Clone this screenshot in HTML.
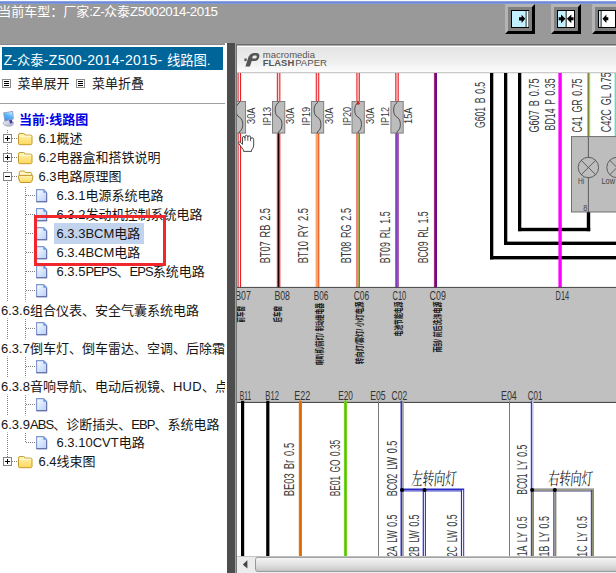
<!DOCTYPE html>
<html lang="zh-CN"><head><meta charset="utf-8"><title>线路图</title>
<style>
html,body{margin:0;padding:0;}
body{width:616px;height:573px;overflow:hidden;position:relative;background:#fff;
 font-family:"Liberation Sans","Noto Sans CJK SC",sans-serif;font-size:13px;color:#161616;}
#top{position:absolute;left:0;top:0;width:616px;height:44px;background:#999;overflow:hidden;}
#top .ln0{position:absolute;left:0;top:0;width:616px;height:4px;
 background:linear-gradient(#fff 0,#f4f6fc 0.9px,#7a96dc 1.6px,#6888d6 2.6px,#7e98dc 3.5px,#999 4px);}
#title{position:absolute;left:-1.7px;top:3px;height:17px;line-height:17px;white-space:nowrap;color:#fff;font-size:13px;}
#title span{font-size:13.33px;letter-spacing:-0.52px}
.btn{position:absolute;top:4px;width:30px;height:30px;box-sizing:border-box;
 border-top:3px solid #b4b4b4;border-left:3px solid #b4b4b4;border-right:3px solid #000;border-bottom:3px solid #000;background:#808080;}
.btn svg{position:absolute;left:3px;top:3px;}
#left{position:absolute;left:0;top:44px;width:225px;height:529px;background:#fff;overflow:hidden;border-top:1px solid #8a8a8a;box-sizing:border-box}
#hdr{position:absolute;left:2px;top:2px;width:221px;height:22.5px;background:#069;color:#fff;font-size:13.33px;line-height:22px;white-space:nowrap;overflow:hidden}
#hdr span{position:absolute;left:1.8px;top:1.5px;}
#hdr i{font-style:normal;font-size:14px;letter-spacing:0.38px}
#hdr em{font-style:normal;font-size:14px}
.mi{position:absolute;top:31px;height:16px;line-height:16px;white-space:nowrap}
.mbox{position:absolute;top:34.3px;width:9px;height:8.4px;box-sizing:border-box;border:1px solid #8c8c8c;background:#fff}
.mbox i{position:absolute;left:1px;width:5px;height:1px;background:#000}
#rule{position:absolute;left:0;top:57.5px;width:225px;height:1px;background:#a0a0a0}
.row{position:absolute;height:19px;line-height:19px;white-space:nowrap;}
.row b{color:#0000e6}
.row .nw{letter-spacing:-0.9px}
.row .wd{letter-spacing:0.3px}
.hl{background:#c2d3ee;padding:2.8px 3.4px 2.7px 2.5px;margin-left:-2.5px}
#tree{position:absolute;left:0;top:0}
#redbox{position:absolute;left:34px;top:170px;width:126px;height:45px;border:3px solid #f0282e}
#split{position:absolute;left:225px;top:43px;width:11px;height:530px;background:linear-gradient(90deg,#fff 0,#fff 1.6px,#aaa 2px,#4d4d4d 2.5px,#4d4d4d 9.7px,#999 10px,#a6a6a6 11px)}
#fp{position:absolute;left:236px;top:44px;}
</style></head>
<body>
<div id="top"><div class="ln0"></div><div id="title">当前车型：厂家<span>:Z-</span>众泰<span>Z5002014-2015</span></div>
<div class="btn" style="left:505px"><svg width="18" height="18" viewBox="0 0 18 18" style="left:3px;top:3px"><rect x="0.5" y="0.5" width="17" height="17" fill="#c2f0ff" stroke="#000"/><rect x="15.5" y="1" width="2" height="16" fill="#fff"/><rect x="14.6" y="1" width="1" height="16" fill="#333"/><path d="M8 7.2h2.6V4.7l3.6 4.1-3.6 4.1V10.4H8z" fill="#000"/></svg></div><div class="btn" style="left:551px"><svg width="18" height="18" viewBox="0 0 18 18" style="left:3px;top:3px"><rect x="0.5" y="0.5" width="17" height="17" fill="#fff" stroke="#000"/><rect x="1" y="1" width="8" height="16" fill="#c2f0ff"/><rect x="8.7" y="1" width="0.9" height="16" fill="#000"/><path d="M1.7 7.3h2.3V4.4l4.4 4.4-4.4 4.4v-2.9H1.7z" fill="#000"/><path d="M16.6 7.3h-2.3V4.4L9.9 8.8l4.4 4.4v-2.9h2.3z" fill="#000"/></svg></div><div class="btn" style="left:592px"><svg width="18" height="18" viewBox="0 0 18 18" style="left:3px;top:3px"><rect x="0.5" y="0.5" width="17" height="17" fill="#fff" stroke="#000"/><rect x="1" y="1" width="1.6" height="16" fill="#c2f0ff"/><rect x="2.6" y="1" width="1" height="16" fill="#222"/><path d="M10.3 7.3H8.4V4.6L4.5 8.8l3.9 4.2v-2.7h1.9z" fill="#000"/></svg></div></div>
<div id="left">
<div id="hdr"><span><em>Z-</em>众泰<i>-Z500-2014-2015- </i>线路图.</span></div>
<div class="mbox" style="left:2px"><i style="top:1px"></i><i style="top:3px"></i><i style="top:5px"></i></div><div class="mi" style="left:17.6px">菜单展开</div><div class="mbox" style="left:76px"><i style="top:1px"></i><i style="top:3px"></i><i style="top:5px"></i></div><div class="mi" style="left:92px">菜单折叠</div>
<div id="rule"></div>
<svg id="tree" width="225" height="528" viewBox="0 45 225 528">
<defs>
<linearGradient id="gf" x1="0" y1="0" x2="0" y2="1"><stop offset="0" stop-color="#fff4b8"/><stop offset="1" stop-color="#ffd75a"/></linearGradient>
<linearGradient id="gd" x1="0" y1="0" x2="1" y2="1"><stop offset="0" stop-color="#fbfdff"/><stop offset="1" stop-color="#b4d0f8"/></linearGradient>
<linearGradient id="gm" x1="0.7" y1="0" x2="0.25" y2="1"><stop offset="0" stop-color="#b4f0ff"/><stop offset="0.45" stop-color="#5ab4f8"/><stop offset="1" stop-color="#3a94ee"/></linearGradient>
<linearGradient id="gb" x1="0" y1="0" x2="1" y2="1"><stop offset="0" stop-color="#f4f4f8"/><stop offset="1" stop-color="#a8a8c8"/></linearGradient>
</defs>
<line x1="7.5" y1="130" x2="7.5" y2="458" stroke="#808080" stroke-width="1" stroke-dasharray="1 1" shape-rendering="crispEdges"/>
<line x1="25.5" y1="187" x2="25.5" y2="443" stroke="#808080" stroke-width="1" stroke-dasharray="1 1" shape-rendering="crispEdges"/>
<rect x="0" y="301.5" width="60" height="17" fill="#fff"/>
<rect x="0" y="339.5" width="60" height="17" fill="#fff"/>
<rect x="0" y="377.5" width="60" height="17" fill="#fff"/>
<rect x="0" y="415.5" width="60" height="17" fill="#fff"/>
<g transform="translate(0,106)"><ellipse cx="8.4" cy="17.3" rx="5.2" ry="3" fill="url(#gb)" stroke="#9c9cc0" stroke-width="0.6"/><path d="M9 13.5l2.6-.8.9 4.2-2.5.6z" fill="#3c3c9c"/><path d="M3.1 6.4L12.4 5Q13 5 13.05 5.6L13.8 12.6Q13.8 13.2 13.2 13.4L5 15.5Q4.5 15.6 4.4 15z" fill="#9696c2"/><path d="M4 7.1L12.2 5.9L12.9 12.5L5.2 14.5z" fill="url(#gm)"/></g>
<line x1="12" y1="138.5" x2="18" y2="138.5" stroke="#808080" stroke-width="1" stroke-dasharray="1 1" shape-rendering="crispEdges"/>
<g transform="translate(3,134)"><rect x="0.5" y="0.5" width="8" height="8" fill="#fff" stroke="#848484"/><path d="M2 4.5h5" stroke="#000"/></g><path d="M7.5 136 v5" stroke="#000"/><g transform="translate(18,133)"><path d="M0.5 2.2q0-1.7 1.6-1.7h3.4q1.2 0 1.6 1.6h5.6q1.3 0 1.3 1.3v7q0 1.3-1.3 1.3H1.8q-1.3 0-1.3-1.3z" fill="url(#gf)" stroke="#c59a2c"/><path d="M1.4 3.2h11.6" stroke="#fffbe0" stroke-width="1"/></g>
<line x1="12" y1="157.5" x2="18" y2="157.5" stroke="#808080" stroke-width="1" stroke-dasharray="1 1" shape-rendering="crispEdges"/>
<g transform="translate(3,153)"><rect x="0.5" y="0.5" width="8" height="8" fill="#fff" stroke="#848484"/><path d="M2 4.5h5" stroke="#000"/></g><path d="M7.5 155 v5" stroke="#000"/><g transform="translate(18,152)"><path d="M0.5 2.2q0-1.7 1.6-1.7h3.4q1.2 0 1.6 1.6h5.6q1.3 0 1.3 1.3v7q0 1.3-1.3 1.3H1.8q-1.3 0-1.3-1.3z" fill="url(#gf)" stroke="#c59a2c"/><path d="M1.4 3.2h11.6" stroke="#fffbe0" stroke-width="1"/></g>
<line x1="12" y1="176.5" x2="18" y2="176.5" stroke="#808080" stroke-width="1" stroke-dasharray="1 1" shape-rendering="crispEdges"/>
<g transform="translate(3,172)"><rect x="0.5" y="0.5" width="8" height="8" fill="#fff" stroke="#848484"/><path d="M2 4.5h5" stroke="#000"/></g><g transform="translate(17.8,170.5)"><path d="M1.5 9.5V2q0-1.5 1.5-1.5h3q1.2 0 1.6 1.5h5q1.4 0 1.4 1.4V6" fill="#fff6c4" stroke="#c89c30"/><path d="M0.7 6.4q-0.3-1.5 1.2-1.5h12q1.5 0 1.2 1.5l-1 4.4q-.3 1.2-1.5 1.2H3.1q-1.2 0-1.4-1.2z" fill="url(#gf)" stroke="#c2942a"/></g>
<line x1="26" y1="195.5" x2="36" y2="195.5" stroke="#808080" stroke-width="1" stroke-dasharray="1 1" shape-rendering="crispEdges"/>
<g transform="translate(36,189)"><path d="M0.6 0.6h7l3 3v9H0.6z" fill="url(#gd)" stroke="#8096d0" stroke-width="1.1"/><path d="M7.4 0.8l3 3h-3z" fill="#5c98ee"/><path d="M0.6 12.6h10v-8.6" stroke="#6a72aa" fill="none" stroke-width="1.1"/></g>
<line x1="26" y1="214.5" x2="36" y2="214.5" stroke="#808080" stroke-width="1" stroke-dasharray="1 1" shape-rendering="crispEdges"/>
<g transform="translate(36,208)"><path d="M0.6 0.6h7l3 3v9H0.6z" fill="url(#gd)" stroke="#8096d0" stroke-width="1.1"/><path d="M7.4 0.8l3 3h-3z" fill="#5c98ee"/><path d="M0.6 12.6h10v-8.6" stroke="#6a72aa" fill="none" stroke-width="1.1"/></g>
<line x1="26" y1="233.5" x2="36" y2="233.5" stroke="#808080" stroke-width="1" stroke-dasharray="1 1" shape-rendering="crispEdges"/>
<g transform="translate(36,227)"><path d="M0.6 0.6h7l3 3v9H0.6z" fill="url(#gd)" stroke="#8096d0" stroke-width="1.1"/><path d="M7.4 0.8l3 3h-3z" fill="#5c98ee"/><path d="M0.6 12.6h10v-8.6" stroke="#6a72aa" fill="none" stroke-width="1.1"/></g>
<line x1="26" y1="252.5" x2="36" y2="252.5" stroke="#808080" stroke-width="1" stroke-dasharray="1 1" shape-rendering="crispEdges"/>
<g transform="translate(36,246)"><path d="M0.6 0.6h7l3 3v9H0.6z" fill="url(#gd)" stroke="#8096d0" stroke-width="1.1"/><path d="M7.4 0.8l3 3h-3z" fill="#5c98ee"/><path d="M0.6 12.6h10v-8.6" stroke="#6a72aa" fill="none" stroke-width="1.1"/></g>
<line x1="26" y1="271.5" x2="36" y2="271.5" stroke="#808080" stroke-width="1" stroke-dasharray="1 1" shape-rendering="crispEdges"/>
<g transform="translate(36,265)"><path d="M0.6 0.6h7l3 3v9H0.6z" fill="url(#gd)" stroke="#8096d0" stroke-width="1.1"/><path d="M7.4 0.8l3 3h-3z" fill="#5c98ee"/><path d="M0.6 12.6h10v-8.6" stroke="#6a72aa" fill="none" stroke-width="1.1"/></g>
<line x1="26" y1="290.5" x2="36" y2="290.5" stroke="#808080" stroke-width="1" stroke-dasharray="1 1" shape-rendering="crispEdges"/>
<g transform="translate(36,284)"><path d="M0.6 0.6h7l3 3v9H0.6z" fill="url(#gd)" stroke="#8096d0" stroke-width="1.1"/><path d="M7.4 0.8l3 3h-3z" fill="#5c98ee"/><path d="M0.6 12.6h10v-8.6" stroke="#6a72aa" fill="none" stroke-width="1.1"/></g>
<line x1="26" y1="328.5" x2="36" y2="328.5" stroke="#808080" stroke-width="1" stroke-dasharray="1 1" shape-rendering="crispEdges"/>
<g transform="translate(36,322)"><path d="M0.6 0.6h7l3 3v9H0.6z" fill="url(#gd)" stroke="#8096d0" stroke-width="1.1"/><path d="M7.4 0.8l3 3h-3z" fill="#5c98ee"/><path d="M0.6 12.6h10v-8.6" stroke="#6a72aa" fill="none" stroke-width="1.1"/></g>
<line x1="26" y1="366.5" x2="36" y2="366.5" stroke="#808080" stroke-width="1" stroke-dasharray="1 1" shape-rendering="crispEdges"/>
<g transform="translate(36,360)"><path d="M0.6 0.6h7l3 3v9H0.6z" fill="url(#gd)" stroke="#8096d0" stroke-width="1.1"/><path d="M7.4 0.8l3 3h-3z" fill="#5c98ee"/><path d="M0.6 12.6h10v-8.6" stroke="#6a72aa" fill="none" stroke-width="1.1"/></g>
<line x1="26" y1="404.5" x2="36" y2="404.5" stroke="#808080" stroke-width="1" stroke-dasharray="1 1" shape-rendering="crispEdges"/>
<g transform="translate(36,398)"><path d="M0.6 0.6h7l3 3v9H0.6z" fill="url(#gd)" stroke="#8096d0" stroke-width="1.1"/><path d="M7.4 0.8l3 3h-3z" fill="#5c98ee"/><path d="M0.6 12.6h10v-8.6" stroke="#6a72aa" fill="none" stroke-width="1.1"/></g>
<line x1="26" y1="442.5" x2="36" y2="442.5" stroke="#808080" stroke-width="1" stroke-dasharray="1 1" shape-rendering="crispEdges"/>
<g transform="translate(36,436)"><path d="M0.6 0.6h7l3 3v9H0.6z" fill="url(#gd)" stroke="#8096d0" stroke-width="1.1"/><path d="M7.4 0.8l3 3h-3z" fill="#5c98ee"/><path d="M0.6 12.6h10v-8.6" stroke="#6a72aa" fill="none" stroke-width="1.1"/></g>
<line x1="12" y1="461.5" x2="18" y2="461.5" stroke="#808080" stroke-width="1" stroke-dasharray="1 1" shape-rendering="crispEdges"/>
<g transform="translate(3,457)"><rect x="0.5" y="0.5" width="8" height="8" fill="#fff" stroke="#848484"/><path d="M2 4.5h5" stroke="#000"/></g><path d="M7.5 459 v5" stroke="#000"/><g transform="translate(18,456)"><path d="M0.5 2.2q0-1.7 1.6-1.7h3.4q1.2 0 1.6 1.6h5.6q1.3 0 1.3 1.3v7q0 1.3-1.3 1.3H1.8q-1.3 0-1.3-1.3z" fill="url(#gf)" stroke="#c59a2c"/><path d="M1.4 3.2h11.6" stroke="#fffbe0" stroke-width="1"/></g>
</svg>
<div class="row" id="r0" style="left:19px;top:65px"><b>当前:线路图</b></div>
<div class="row" id="r1" style="left:38.5px;top:84px">6.1概述</div>
<div class="row" id="r2" style="left:38.5px;top:103px">6.2电器盒和搭铁说明</div>
<div class="row" id="r3" style="left:38.5px;top:122px">6.3电路原理图</div>
<div class="row" id="r4" style="left:56.5px;top:141px">6.3.1电源系统电路</div>
<div class="row" id="r5" style="left:56.5px;top:160px">6.3.2发动机控制系统电路</div>
<div class="row" id="r6" style="left:56.5px;top:179px"><span class="hl">6.3.3BCM电路</span></div>
<div class="row" id="r7" style="left:56.5px;top:198px">6.3.4BCM电路</div>
<div class="row" id="r8" style="left:56.5px;top:217px">6.3.5<span class="nw">PEPS</span>、<span class="nw">EPS</span>系统电路</div>
<div class="row" id="r10" style="left:1px;top:256px">6.3.6组合仪表、安全气囊系统电路</div>
<div class="row" id="r12" style="left:1px;top:294px">6.3.7倒车灯、倒车雷达、空调、后除霜</div>
<div class="row" id="r14" style="left:1px;top:332px">6.3.8音响导航、电动后视镜、<span class="wd">HUD</span>、点</div>
<div class="row" id="r16" style="left:1px;top:370px">6.3.9<span class="nw">ABS</span>、诊断插头、<span class="nw">EBP</span>、系统电路</div>
<div class="row" id="r17" style="left:56.5px;top:388px">6.3.10CVT电路</div>
<div class="row" id="r18" style="left:38.5px;top:407px">6.4线束图</div>
<div id="redbox"></div>
</div>
<div id="split"></div>
<svg id="fp" width="380" height="529" viewBox="236 44 380 529" font-family="'Liberation Sans','Noto Sans CJK SC',sans-serif">
<defs>
<linearGradient id="tb" x1="0" y1="0" x2="0" y2="1"><stop offset="0" stop-color="#e4e4e4"/><stop offset="0.55" stop-color="#eeeeee"/><stop offset="1" stop-color="#fdfdfd"/></linearGradient>
<linearGradient id="sb" x1="0" y1="0" x2="0" y2="1"><stop offset="0" stop-color="#f6f6f6"/><stop offset="0.5" stop-color="#e2e2e2"/><stop offset="1" stop-color="#c6c6c6"/></linearGradient>
<clipPath id="cp"><rect x="237" y="73" width="379" height="483"/></clipPath>
</defs>
<rect x="236" y="44" width="380" height="529" fill="#fff"/>
<rect x="236" y="44" width="380" height="2" fill="#6e6e6e"/><rect x="237" y="45.6" width="379" height="1.4" fill="#fff"/><rect x="237" y="47" width="379" height="25.5" fill="url(#tb)"/><rect x="237" y="72.3" width="379" height="0.9" fill="#b4b4b4"/>
<g fill="#555"><path d="M244.4 58.5h2.3v2.6h-2.3z"/><path fill-rule="evenodd" d="M245.4 66.6L247.6 59.8Q249.2 53.1 254 53.1L257 53.1Q259.7 53.1 259.4 56.2Q258.9 60.9 254.4 60.9L251.7 60.9L249.9 66.6ZM252.5 58.5L254.8 58.5Q256.5 58.5 256.8 56.9Q257 55.5 255.6 55.5L254 55.5Q252.7 55.5 252.4 57Z"/></g>
<text x="262.8" y="57.9" font-size="8.2" fill="#555" textLength="52.2" lengthAdjust="spacingAndGlyphs">macromedia</text><text x="262.8" y="66.4" font-size="9.1" font-weight="bold" fill="#555" textLength="31.4" lengthAdjust="spacingAndGlyphs">FLASH</text><text x="295.2" y="66.4" font-size="9.1" fill="#555" textLength="31.8" lengthAdjust="spacingAndGlyphs">PAPER</text>
<g clip-path="url(#cp)">
<rect x="237.5" y="73" width="3.6" height="215" fill="#e02428"/><rect x="238.60000000000002" y="73" width="1.4" height="215" fill="#ffe4e4"/><rect x="276.8" y="73" width="3.6" height="28.5" fill="#e63034"/><rect x="277.95000000000005" y="73" width="1.3" height="28.5" fill="#ffd0d0"/><rect x="276.8" y="133" width="1.0" height="155" fill="#ee2a2a"/><rect x="277.8" y="133" width="1.8" height="155" fill="#1c0000"/><rect x="279.6" y="133" width="0.8" height="155" fill="#f03434"/><rect x="315.7" y="73" width="3.6" height="28.5" fill="#e63034"/><rect x="316.85" y="73" width="1.3" height="28.5" fill="#ffd0d0"/><rect x="315.7" y="133" width="1.0" height="155" fill="#f47a6a"/><rect x="316.7" y="133" width="1.5" height="155" fill="#ffb000"/><rect x="318.2" y="133" width="1.1" height="155" fill="#e8480e"/><rect x="356.3" y="73" width="3.6" height="28.5" fill="#e63034"/><rect x="357.45000000000005" y="73" width="1.3" height="28.5" fill="#ffd0d0"/><rect x="356.3" y="133" width="1.1" height="155" fill="#e8483a"/><rect x="357.4" y="133" width="1.2" height="155" fill="#c88a18"/><rect x="358.6" y="133" width="1.4" height="155" fill="#4aa018"/><rect x="395.2" y="73" width="3.6" height="28.5" fill="#e63034"/><rect x="396.35" y="73" width="1.3" height="28.5" fill="#ffd0d0"/><rect x="395.2" y="133" width="1.0" height="155" fill="#e03058"/><rect x="396.2" y="133" width="1.4" height="155" fill="#5a20b8"/><rect x="397.6" y="133" width="1.1" height="155" fill="#8a2090"/><rect x="433.9" y="73" width="0.9" height="215" fill="#b0106a"/><rect x="434.7" y="73" width="2.3" height="215" fill="#6c0a8c"/><rect x="233.3" y="101.5" width="12.3" height="31.6" fill="#bcbcbc" stroke="#777" stroke-width="0.9"/><path d="M239.4 101.5 v1.2 c-4.5 2 -4.5 12.5 0 14.5 s4.5 12.5 0 14.5 v1.4" fill="none" stroke="#333" stroke-width="0.8"/>
<text transform="translate(255,124) rotate(-90)" font-size="11.2" fill="#3a3a3a" textLength="16.5" lengthAdjust="spacingAndGlyphs" word-spacing="2">30A</text>
<rect x="272.5" y="101.5" width="12.3" height="31.6" fill="#bcbcbc" stroke="#777" stroke-width="0.9"/><path d="M278.6 101.5 v1.2 c-4.5 2 -4.5 12.5 0 14.5 s4.5 12.5 0 14.5 v1.4" fill="none" stroke="#333" stroke-width="0.8"/>
<text transform="translate(271.0,125.6) rotate(-90)" font-size="11.2" fill="#3a3a3a" textLength="18.8" lengthAdjust="spacingAndGlyphs" word-spacing="2">IP13</text>
<text transform="translate(294.0,124) rotate(-90)" font-size="11.2" fill="#3a3a3a" textLength="16.5" lengthAdjust="spacingAndGlyphs" word-spacing="2">30A</text>
<rect x="311.4" y="101.5" width="12.3" height="31.6" fill="#bcbcbc" stroke="#777" stroke-width="0.9"/><path d="M317.5 101.5 v1.2 c-4.5 2 -4.5 12.5 0 14.5 s4.5 12.5 0 14.5 v1.4" fill="none" stroke="#333" stroke-width="0.8"/>
<text transform="translate(309.9,125.6) rotate(-90)" font-size="11.2" fill="#3a3a3a" textLength="18.8" lengthAdjust="spacingAndGlyphs" word-spacing="2">IP19</text>
<text transform="translate(332.9,124) rotate(-90)" font-size="11.2" fill="#3a3a3a" textLength="16.5" lengthAdjust="spacingAndGlyphs" word-spacing="2">30A</text>
<rect x="352.0" y="101.5" width="12.3" height="31.6" fill="#bcbcbc" stroke="#777" stroke-width="0.9"/><path d="M358.1 101.5 v1.2 c-4.5 2 -4.5 12.5 0 14.5 s4.5 12.5 0 14.5 v1.4" fill="none" stroke="#333" stroke-width="0.8"/>
<text transform="translate(350.5,125.6) rotate(-90)" font-size="11.2" fill="#3a3a3a" textLength="18.8" lengthAdjust="spacingAndGlyphs" word-spacing="2">IP20</text>
<text transform="translate(373.5,124) rotate(-90)" font-size="11.2" fill="#3a3a3a" textLength="16.5" lengthAdjust="spacingAndGlyphs" word-spacing="2">30A</text>
<rect x="390.9" y="101.5" width="12.3" height="31.6" fill="#bcbcbc" stroke="#777" stroke-width="0.9"/><path d="M397.0 101.5 v1.2 c-4.5 2 -4.5 12.5 0 14.5 s4.5 12.5 0 14.5 v1.4" fill="none" stroke="#333" stroke-width="0.8"/>
<text transform="translate(389.4,125.6) rotate(-90)" font-size="11.2" fill="#3a3a3a" textLength="18.8" lengthAdjust="spacingAndGlyphs" word-spacing="2">IP12</text>
<text transform="translate(412.4,124) rotate(-90)" font-size="11.2" fill="#3a3a3a" textLength="16.5" lengthAdjust="spacingAndGlyphs" word-spacing="2">15A</text>
<circle cx="358.2" cy="103.2" r="1.5" fill="#e01818"/><path d="M243.6 151.4L243.2 149.6L238.7 143.4Q238.2 142.2 239.4 141.9Q240.2 141.8 240.8 142.6L242.5 144.4V138Q242.5 136.4 243.8 136.4Q245 136.4 245 138V136.9Q245 135.4 246.4 135.4Q247.8 135.4 247.8 136.9V137.2Q247.8 135.8 249.2 135.8Q250.6 135.8 250.6 137.3V139Q250.6 137.8 252.1 137.8Q253.7 137.8 253.7 139.4V145Q253.7 148 251.6 150L251.5 151.4Z" fill="#fff" stroke="#333" stroke-width="0.9"/><path d="M245 138V140.8M247.8 137.2V140.8M250.6 139V141.2" stroke="#333" stroke-width="0.8" fill="none"/>
<text transform="translate(270.1,263.3) rotate(-90)" font-size="14" fill="#3a3a3a" textLength="55.2" lengthAdjust="spacingAndGlyphs" word-spacing="2">BT07 RB 2.5</text>
<text transform="translate(307.8,263.3) rotate(-90)" font-size="14" fill="#3a3a3a" textLength="55.2" lengthAdjust="spacingAndGlyphs" word-spacing="2">BT10 RY 2.5</text>
<text transform="translate(350.6,263.3) rotate(-90)" font-size="14" fill="#3a3a3a" textLength="55.2" lengthAdjust="spacingAndGlyphs" word-spacing="2">BT08 RG 2.5</text>
<text transform="translate(389.6,263.3) rotate(-90)" font-size="14" fill="#3a3a3a" textLength="52" lengthAdjust="spacingAndGlyphs" word-spacing="2">BT09 RL 1.5</text>
<text transform="translate(427.9,263.3) rotate(-90)" font-size="14" fill="#3a3a3a" textLength="52" lengthAdjust="spacingAndGlyphs" word-spacing="2">BC09 RL 1.5</text>
<text transform="translate(485.3,127.9) rotate(-90)" font-size="14" fill="#3a3a3a" textLength="46" lengthAdjust="spacingAndGlyphs" word-spacing="2">G601 B 0.5</text>
<text transform="translate(538.7,132.5) rotate(-90)" font-size="14" fill="#3a3a3a" textLength="54" lengthAdjust="spacingAndGlyphs" word-spacing="2">G607 B 0.75</text>
<text transform="translate(554.7,130.4) rotate(-90)" font-size="14" fill="#3a3a3a" textLength="52" lengthAdjust="spacingAndGlyphs" word-spacing="2">BD14 P 0.35</text>
<text transform="translate(582.3,132.5) rotate(-90)" font-size="14" fill="#3a3a3a" textLength="54" lengthAdjust="spacingAndGlyphs" word-spacing="2">C41 GR 0.75</text>
<text transform="translate(610.5,132.2) rotate(-90)" font-size="14" fill="#3a3a3a" textLength="60" lengthAdjust="spacingAndGlyphs" word-spacing="2">C42C GL 0.75</text>
<rect x="490" y="73" width="3.3" height="186.4" fill="#000"/><rect x="490" y="256" width="126" height="3.4" fill="#000"/><rect x="504" y="73" width="3.3" height="172" fill="#000"/><rect x="504" y="241.6" width="112" height="3.4" fill="#000"/><rect x="518" y="73" width="3.3" height="158.2" fill="#000"/><rect x="518" y="227.8" width="72.2" height="3.4" fill="#000"/><rect x="586.8" y="212" width="3.4" height="19.2" fill="#000"/><rect x="558.4" y="73" width="3.4" height="215" fill="#ff00ff"/><rect x="587.4" y="73" width="1.0" height="64" fill="#22cc22"/><rect x="588.3" y="73" width="1.1" height="64" fill="#7a5a10"/><rect x="589.3" y="73" width="0.9" height="64" fill="#88e060"/><rect x="614.6" y="73" width="1.4" height="64" fill="#66ddbb"/><rect x="571.5" y="136.6" width="60" height="75.4" fill="#bdbdbd" stroke="#666" stroke-width="0.9"/><g stroke="#444" stroke-width="0.8" fill="none"><path d="M588.4 137v20.3M588.4 177.7V212"/><circle cx="588.4" cy="167.5" r="10.2"/><path d="M581.2 160.3l14.4 14.4M595.6 160.3l-14.4 14.4"/><circle cx="617" cy="167.5" r="10.2"/><path d="M609.8 160.3l14.4 14.4"/><path d="M609.8 174.7l14.4-14.4"/></g>
<text x="578" y="184.2" font-size="8.4" fill="#444" textLength="6.2" lengthAdjust="spacingAndGlyphs">Hi</text>
<text x="601.4" y="184.2" font-size="8.4" fill="#444" textLength="13.6" lengthAdjust="spacingAndGlyphs">Low</text>
<text x="583.2" y="211" font-size="9" fill="#444" textLength="4" lengthAdjust="spacingAndGlyphs">8</text>
<rect x="237" y="287.5" width="379" height="115" fill="#c0c0c0"/><rect x="237" y="286.9" width="379" height="1" fill="#444"/><rect x="237" y="401.9" width="379" height="1" fill="#3a3a3a"/>
<text x="235.2" y="299.6" font-size="12.2" fill="#333" textLength="15.6" lengthAdjust="spacingAndGlyphs">B07</text>
<text x="274.4" y="299.6" font-size="12.2" fill="#333" textLength="15.6" lengthAdjust="spacingAndGlyphs">B08</text>
<text x="313.7" y="299.6" font-size="12.2" fill="#333" textLength="14.6" lengthAdjust="spacingAndGlyphs">B06</text>
<text x="353.8" y="299.6" font-size="12.2" fill="#333" textLength="15.4" lengthAdjust="spacingAndGlyphs">C06</text>
<text x="392.5" y="299.6" font-size="12.2" fill="#333" textLength="13.8" lengthAdjust="spacingAndGlyphs">C10</text>
<text x="429.6" y="299.6" font-size="12.2" fill="#333" textLength="16.2" lengthAdjust="spacingAndGlyphs">C09</text>
<text x="555.6" y="299.6" font-size="12.2" fill="#333" textLength="13.6" lengthAdjust="spacingAndGlyphs">D14</text>
<text x="239.8" y="400.2" font-size="12.4" fill="#333" textLength="11.4" lengthAdjust="spacingAndGlyphs">B11</text>
<text x="265.3" y="400.2" font-size="12.4" fill="#333" textLength="13.6" lengthAdjust="spacingAndGlyphs">B12</text>
<text x="294.2" y="400.2" font-size="12.4" fill="#333" textLength="16" lengthAdjust="spacingAndGlyphs">E22</text>
<text x="338.2" y="400.2" font-size="12.4" fill="#333" textLength="14.8" lengthAdjust="spacingAndGlyphs">E20</text>
<text x="370.2" y="400.2" font-size="12.4" fill="#333" textLength="15.4" lengthAdjust="spacingAndGlyphs">E05</text>
<text x="391.6" y="400.2" font-size="12.4" fill="#333" textLength="15.6" lengthAdjust="spacingAndGlyphs">C02</text>
<text x="501" y="400.2" font-size="12.4" fill="#333" textLength="15.8" lengthAdjust="spacingAndGlyphs">E04</text>
<text x="527.8" y="400.2" font-size="12.4" fill="#333" textLength="14.6" lengthAdjust="spacingAndGlyphs">C01</text>
<text transform="translate(243.8,322.4) rotate(-90)" font-size="9.6" fill="#1a1a1a" textLength="16.2" lengthAdjust="spacingAndGlyphs" font-weight="bold">前车窗</text>
<text transform="translate(280.6,322.4) rotate(-90)" font-size="9.6" fill="#1a1a1a" textLength="16.2" lengthAdjust="spacingAndGlyphs" font-weight="bold">后车窗</text>
<text transform="translate(322.6,365) rotate(-90)" font-size="9.6" fill="#1a1a1a" textLength="62" lengthAdjust="spacingAndGlyphs" font-weight="bold">喇叭机/前灯/ 制动继电器</text>
<text transform="translate(363.2,364.2) rotate(-90)" font-size="9.6" fill="#1a1a1a" textLength="62.6" lengthAdjust="spacingAndGlyphs" font-weight="bold">转向灯/雾灯/ 小灯电源</text>
<text transform="translate(402.2,336.6) rotate(-90)" font-size="9.6" fill="#1a1a1a" textLength="35" lengthAdjust="spacingAndGlyphs" font-weight="bold">电池节能电源</text>
<text transform="translate(440.8,352.6) rotate(-90)" font-size="9.6" fill="#1a1a1a" textLength="51" lengthAdjust="spacingAndGlyphs" font-weight="bold">雨刮/ 前后洗涤电源</text>
<rect x="241" y="400.8" width="3.2" height="155.2" fill="#000"/><rect x="266.2" y="400.8" width="3.2" height="155.2" fill="#000"/><rect x="298.8" y="400.8" width="3.2" height="155.2" fill="#e07a1a"/><rect x="299.8" y="400.8" width="1.2" height="155.2" fill="#d86a08"/><rect x="343.9" y="400.8" width="3.2" height="155.2" fill="#7ad426"/><rect x="344.9" y="400.8" width="1.2" height="155.2" fill="#58c000"/><rect x="378" y="400.8" width="1" height="155.2" fill="#7a7a7a"/><rect x="509" y="400.8" width="1" height="155.2" fill="#7a7a7a"/><rect x="400.5" y="488.5" width="63.7" height="1.6" fill="#2a2ac4"/><rect x="400.5" y="490.1" width="62.6" height="1.5" fill="#6c6cd2"/><rect x="400.5" y="400.8" width="1.6" height="155.2" fill="#3232cc"/><rect x="402.1" y="400.8" width="1.7" height="155.2" fill="#9c9ca4"/><rect x="422.7" y="491.4" width="1.25" height="64.6" fill="#2c2cc8"/><rect x="423.95" y="491.4" width="0.95" height="64.6" fill="#f2f2ff"/><rect x="424.9" y="491.4" width="1.1" height="64.6" fill="#3c3ccc"/><rect x="460.9" y="490" width="1.25" height="66" fill="#2c2cc8"/><rect x="462.15" y="490" width="0.95" height="66" fill="#f2f2ff"/><rect x="463.09999999999997" y="490" width="1.1" height="66" fill="#3c3ccc"/><rect x="530.8" y="488.5" width="63.2" height="1.1" fill="#74749a"/><rect x="530.8" y="489.5" width="63.2" height="1.2" fill="#90903c"/><rect x="530.8" y="490.6" width="62" height="1" fill="#6262a4"/><rect x="530.8" y="400.8" width="1.2" height="89.2" fill="#3838cc"/><rect x="532" y="400.8" width="1.6" height="89.2" fill="#c4c4f0"/><rect x="530.8" y="490" width="1.3" height="66" fill="#4646c4"/><rect x="532.0999999999999" y="490" width="1.9" height="66" fill="#8a8a68"/><rect x="553.2" y="491.4" width="1.3" height="64.6" fill="#4646c4"/><rect x="554.5" y="491.4" width="1.9" height="64.6" fill="#8a8a68"/><rect x="590.8" y="490" width="1.3" height="66" fill="#4646c4"/><rect x="592.0999999999999" y="490" width="1.9" height="66" fill="#8a8a68"/><circle cx="402.1" cy="490" r="2.1" fill="#000"/><circle cx="424.5" cy="490" r="2.1" fill="#000"/><circle cx="532.2" cy="490" r="2.1" fill="#000"/><circle cx="554.8" cy="490" r="2.1" fill="#000"/>
<text transform="translate(293.6,496.2) rotate(-90)" font-size="14" fill="#3a3a3a" textLength="53.4" lengthAdjust="spacingAndGlyphs" word-spacing="2">BE03 Br 0.5</text>
<text transform="translate(340,496.2) rotate(-90)" font-size="14" fill="#3a3a3a" textLength="56.4" lengthAdjust="spacingAndGlyphs" word-spacing="2">BE01 GO 0.35</text>
<text transform="translate(396.8,496.2) rotate(-90)" font-size="14" fill="#3a3a3a" textLength="55.5" lengthAdjust="spacingAndGlyphs" word-spacing="2">BC02 LW 0.5</text>
<text transform="translate(527.1,494.8) rotate(-90)" font-size="14" fill="#3a3a3a" textLength="50" lengthAdjust="spacingAndGlyphs" word-spacing="2">BC01 LY 0.5</text>
<text transform="translate(396.9,573.6) rotate(-90)" font-size="14" fill="#3a3a3a" textLength="59" lengthAdjust="spacingAndGlyphs" word-spacing="2">BC02A LW 0.5</text>
<text transform="translate(419.3,573.6) rotate(-90)" font-size="14" fill="#3a3a3a" textLength="59" lengthAdjust="spacingAndGlyphs" word-spacing="2">BC02B LW 0.5</text>
<text transform="translate(457.3,573.6) rotate(-90)" font-size="14" fill="#3a3a3a" textLength="59" lengthAdjust="spacingAndGlyphs" word-spacing="2">BC02C LW 0.5</text>
<text transform="translate(527.2,573.6) rotate(-90)" font-size="14" fill="#3a3a3a" textLength="57.4" lengthAdjust="spacingAndGlyphs" word-spacing="2">BC01A LY 0.5</text>
<text transform="translate(548.9,573.6) rotate(-90)" font-size="14" fill="#3a3a3a" textLength="57.4" lengthAdjust="spacingAndGlyphs" word-spacing="2">BC01B LY 0.5</text>
<text transform="translate(586.8,573.6) rotate(-90)" font-size="14" fill="#3a3a3a" textLength="57.4" lengthAdjust="spacingAndGlyphs" word-spacing="2">BC01C LY 0.5</text>
<g transform="translate(411,484.6) skewX(-5)"><text x="0" y="0" font-size="17.6" fill="#111" font-family="'Liberation Serif','Noto Serif CJK SC',serif" textLength="45" lengthAdjust="spacingAndGlyphs">左转向灯</text></g>
<g transform="translate(547.8,485.4) skewX(-5)"><text x="0" y="0" font-size="17.6" fill="#111" font-family="'Liberation Serif','Noto Serif CJK SC',serif" textLength="44.4" lengthAdjust="spacingAndGlyphs">右转向灯</text></g>
</g>
<rect x="237" y="556" width="379" height="17" fill="#ececec"/><rect x="237" y="556" width="379" height="1" fill="#c4c4c4"/><path d="M247.4 560.2v8.4l-4.6-4.2z" fill="#444"/><rect x="255.5" y="557.4" width="380" height="14" rx="2.2" fill="url(#sb)" stroke="#8e8e8e" stroke-width="0.9"/>
<rect x="236" y="44" width="1" height="529" fill="#777"/>
</svg>
</body></html>
